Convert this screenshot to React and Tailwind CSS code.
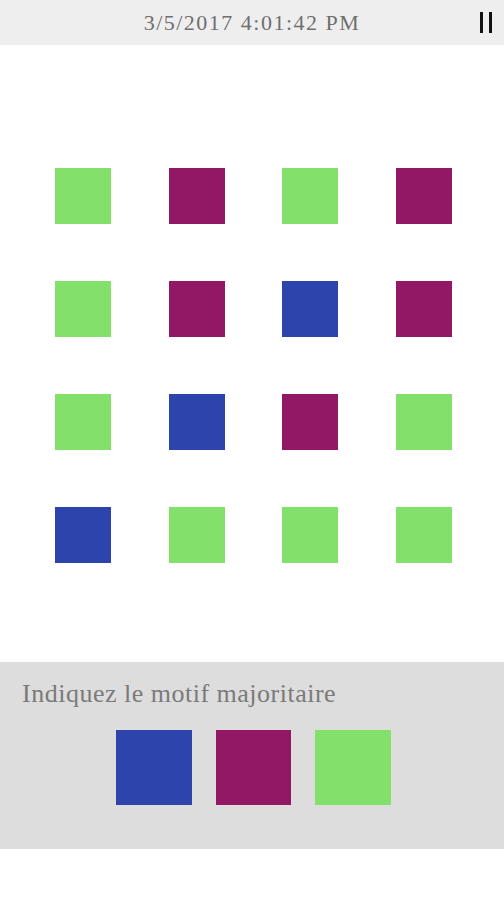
const GREEN = "bg-[#83e16b]";
const PURPLE = "bg-[#921866]";
const BLUE = "bg-[#2d44ac]";

const GRID = [
  ["g", "p", "g", "p"],
  ["g", "p", "b", "p"],
  ["g", "b", "p", "g"],
  ["b", "g", "g", "g"],
];

const COLORS = { g: GREEN, p: PURPLE, b: BLUE };

export default function App() {
  return (
    <div className="w-[504px] h-[900px] bg-white flex flex-col" style={{ fontFamily: '"Liberation Serif", serif' }}>
      <header className="relative h-[45px] bg-[#eeeeee] flex items-center justify-center">
        <span className="text-[22px] leading-[26px] tracking-[1.5px] text-[#6f6f6f] pt-[1px]">
          3/5/2017 4:01:42 PM
        </span>
        <div className="absolute right-[12px] top-[12px] flex gap-[6px]">
          <span className="block w-[3px] h-[21px] bg-[#111]" />
          <span className="block w-[3px] h-[21px] bg-[#111]" />
        </div>
      </header>

      <main className="h-[617px] pt-[123px] pl-[55px]">
        <div className="grid grid-cols-[repeat(4,56px)] gap-x-[57.5px] gap-y-[57px]">
          {GRID.flat().map((c, i) => (
            <div key={i} className={`w-[56px] h-[56px] ${COLORS[c]}`} />
          ))}
        </div>
      </main>

      <section className="h-[187px] bg-[#dddddd] pt-[17px]">
        <p className="pl-[22px] text-[26px] leading-[30px] tracking-[0.5px] text-[#7a7a7a]">
          Indiquez le motif majoritaire
        </p>
        <div className="mt-[21px] flex gap-[24px] pl-[116px]">
          <button className={`w-[76px] h-[75px] ${BLUE}`} />
          <button className={`w-[75px] h-[75px] ${PURPLE}`} />
          <button className={`w-[76px] h-[75px] ${GREEN}`} />
        </div>
      </section>
    </div>
  );
}
